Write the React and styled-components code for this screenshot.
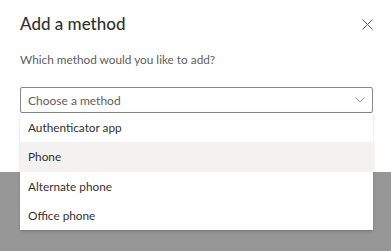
import React from "react";
import styled, { createGlobalStyle } from "styled-components";

const Global = createGlobalStyle`
  html, body { margin: 0; padding: 0; }
  body {
    width: 391px;
    height: 251px;
    overflow: hidden;
    background: #979797;
    font-family: "Lato", "Noto Sans", sans-serif;
  }
`;

const Dialog = styled.div`
  background: #ffffff;
  height: 172px;
  box-sizing: border-box;
  padding: 12px 18px 0 20px;
  display: flex;
  flex-direction: column;
`;

const Header = styled.div`
  display: flex;
  align-items: center;
  justify-content: space-between;
  height: 24px;
`;

const Title = styled.h1`
  margin: 0;
  font-size: 17px;
  font-weight: 500;
  color: #323130;
  line-height: 24px;
`;

const Close = styled.button`
  border: none;
  background: none;
  padding: 0;
  width: 12px;
  height: 12px;
  display: flex;
  align-items: center;
  justify-content: center;
`;

const Prompt = styled.p`
  margin: 14px 0 0;
  font-size: 11.8px;
  line-height: 20px;
  color: #605e5c;
`;

const Field = styled.div`
  position: relative;
  margin-top: 17px;
  width: 353px;
`;

const SelectBox = styled.div`
  box-sizing: border-box;
  height: 26px;
  border: 1px solid #8a8886;
  border-radius: 2px;
  display: flex;
  align-items: center;
  justify-content: space-between;
  padding: 0 7px 0 7px;
  font-size: 12px;
  color: #605e5c;
`;

const Menu = styled.ul`
  position: absolute;
  left: 0;
  right: 0;
  top: 26px;
  margin: 0;
  padding: 0;
  list-style: none;
  background: #ffffff;
  box-shadow: 0 1.6px 3.6px rgba(0, 0, 0, 0.13), 0 0.3px 0.9px rgba(0, 0, 0, 0.11);
  border-radius: 0 0 2px 2px;
`;

const Item = styled.li`
  height: 29.25px;
  display: flex;
  align-items: center;
  padding-left: 8px;
  font-size: 11.8px;
  color: #323130;
  background: ${(p) => (p.$active ? "#f3f2f1" : "#ffffff")};
`;

const items = ["Authenticator app", "Phone", "Alternate phone", "Office phone"];

export default function App() {
  return (
    <>
      <Global />
      <Dialog>
        <Header>
          <Title>Add a method</Title>
          <Close aria-label="Close">
            <svg width="11" height="11" viewBox="0 0 11 11">
              <path d="M0.5 0.5 L10.5 10.5 M10.5 0.5 L0.5 10.5" stroke="#605e5c" strokeWidth="1" fill="none" />
            </svg>
          </Close>
        </Header>
        <Prompt>Which method would you like to add?</Prompt>
        <Field>
          <SelectBox>
            <span>Choose a method</span>
            <svg width="10" height="6" viewBox="0 0 10 6">
              <path d="M0.5 0.5 L5 5 L9.5 0.5" stroke="#a19f9d" strokeWidth="1" fill="none" />
            </svg>
          </SelectBox>
          <Menu>
            {items.map((t) => (
              <Item key={t} $active={t === "Phone"}>{t}</Item>
            ))}
          </Menu>
        </Field>
      </Dialog>
    </>
  );
}
